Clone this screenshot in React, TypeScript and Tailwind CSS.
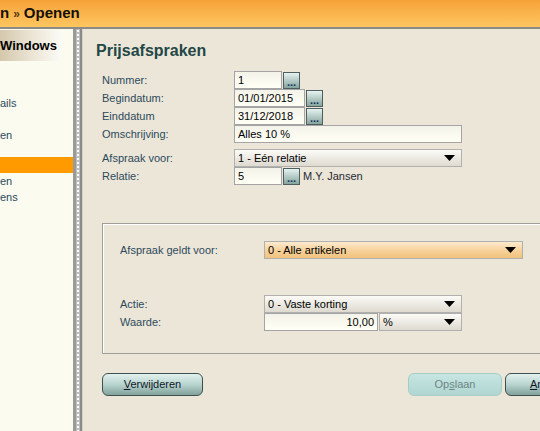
import type { ReactNode } from "react";

function Arrow() {
  return (
    <svg width="11" height="6" viewBox="0 0 11 6" className="shrink-0">
      <path d="M0 0h11L5.5 6z" fill="#000" />
    </svg>
  );
}

function DotsButton() {
  return (
    <span className="flex h-[17px] w-[17px] shrink-0 items-end justify-center border border-[#4f5f5f] bg-gradient-to-b from-[#e6f3f0] to-[#86a49e] pb-[1px] text-[11px] font-bold leading-[10px] text-[#12305a]">
      ...
    </span>
  );
}

function TextBox({ value, width, align = "left" }: { value: string; width: string; align?: "left" | "right" }) {
  return (
    <span
      className={`flex h-[18px] items-center border border-[#a4a4a4] bg-gradient-to-b from-[#f4f3ea] to-[#fffff6] px-[3px] text-[11px] text-black ${width} ${
        align === "right" ? "justify-end" : ""
      }`}
    >
      {value}
    </span>
  );
}

function Select({ value, width, orange = false }: { value: string; width: string; orange?: boolean }) {
  return (
    <span
      className={`flex h-[18px] items-center justify-between border border-[#b0b0ae] pl-[3px] pr-[6px] text-[11px] text-black ${width} ${
        orange ? "bg-gradient-to-b from-[#fdebd0] via-[#f8d29c] to-[#f0c27c]" : "bg-gradient-to-b from-[#fcfbf7] to-[#dedad0]"
      }`}
    >
      {value}
      <Arrow />
    </span>
  );
}

function Row({ label, labelWidth, children }: { label: string; labelWidth: string; children: ReactNode }) {
  return (
    <div className="flex h-[18px] items-center">
      <span className={`${labelWidth} shrink-0 text-[11px] text-[#2c4a5c]`}>{label}</span>
      <div className="flex items-center gap-[1px]">{children}</div>
    </div>
  );
}

function Button({ children, disabled = false, width }: { children: ReactNode; disabled?: boolean; width: string }) {
  return (
    <span
      className={`flex h-[23px] shrink-0 items-center justify-center rounded-[6px] text-[11px] ${width} ${
        disabled
          ? "border border-[#a8ccc6] bg-gradient-to-b from-[#c6e6e2] to-[#b0d6d2] text-[#6e8484]"
          : "border border-[#3e5050] bg-gradient-to-b from-[#e2f1ee] via-[#b8d4cf] to-[#82a29c] text-[#101828]"
      }`}
    >
      {children}
    </span>
  );
}

export default function App() {
  return (
    <div className="flex h-[431px] w-[540px] flex-col overflow-hidden bg-[#ece6d8] font-['Liberation_Sans',Arial,sans-serif]">
      <header className="flex h-[29px] shrink-0 items-center gap-[4px] border-b-2 border-[#8c8a84] bg-gradient-to-b from-[#f6a237] to-[#fec660] text-[15px] font-bold text-[#141008]">
        <span>n</span>
        <span className="text-[12px] text-[#5a3a10]">»</span>
        <span>Openen</span>
      </header>

      <div className="flex flex-1">
        <aside className="flex w-[73px] shrink-0 flex-col bg-[#fbfbef] text-[11px] text-[#2c4a5c]">
          <div className="mt-[1px] flex h-[31px] w-[62px] items-center bg-gradient-to-r from-[#d4c8ac] via-[#ebe4d4] to-[#fcfbf6] text-[13px] font-bold text-black">
            Windows
          </div>
          <span className="mt-[35px] leading-[14px]">ails</span>
          <span className="mt-[18px] leading-[14px]">en</span>
          <span className="mt-[15px] h-[16px] bg-[#ff9a00]" />
          <span className="mt-[1px] leading-[14px]">en</span>
          <span className="mt-[2px] leading-[14px]">ens</span>
        </aside>

        <div className="flex w-[10px] shrink-0">
          <span className="w-[3px] bg-[#9a9a98]" />
          <span className="w-[4px] bg-[#bdbdbb] bg-[radial-gradient(circle,#ffffff_0.8px,transparent_1px)] bg-[length:4px_4px]" />
          <span className="w-[2px] bg-[#8a8a88]" />
          <span className="w-[1px] bg-[#d8d2c4]" />
        </div>

        <main className="flex min-w-0 flex-1 flex-col pl-[13px]">
          <h1 className="mt-[12px] text-[16px] font-bold leading-[20px] text-[#234646]">Prijsafspraken</h1>

          <div className="mt-[10px] flex flex-col pl-[6px]">
            <Row label="Nummer:" labelWidth="w-[132px]">
              <TextBox value="1" width="w-[48px]" />
              <DotsButton />
            </Row>
            <Row label="Begindatum:" labelWidth="w-[132px]">
              <TextBox value="01/01/2015" width="w-[71px]" />
              <DotsButton />
            </Row>
            <Row label="Einddatum" labelWidth="w-[132px]">
              <TextBox value="31/12/2018" width="w-[71px]" />
              <DotsButton />
            </Row>
            <Row label="Omschrijving:" labelWidth="w-[132px]">
              <TextBox value="Alles 10 %" width="w-[228px]" />
            </Row>
            <div className="h-[6px]" />
            <Row label="Afspraak voor:" labelWidth="w-[132px]">
              <Select value="1 - Eén relatie" width="w-[228px]" />
            </Row>
            <Row label="Relatie:" labelWidth="w-[132px]">
              <TextBox value="5" width="w-[48px]" />
              <DotsButton />
              <span className="ml-[2px] text-[11px] text-[#1e2a36]">M.Y. Jansen</span>
            </Row>
          </div>

          <section className="-mr-[20px] ml-[6px] mt-[38px] flex h-[131px] flex-col border border-[#a09e98] pl-[17px] pt-[17px] shadow-[inset_1px_1px_0_#ffffff]">
            <Row label="Afspraak geldt voor:" labelWidth="w-[144px]">
              <Select value="0 - Alle artikelen" width="w-[259px]" orange />
            </Row>
            <div className="h-[36px]" />
            <Row label="Actie:" labelWidth="w-[144px]">
              <Select value="0 - Vaste korting" width="w-[198px]" />
            </Row>
            <Row label="Waarde:" labelWidth="w-[144px]">
              <TextBox value="10,00" width="w-[114px]" align="right" />
              <Select value="%" width="w-[83px]" />
            </Row>
          </section>

          <div className="ml-[6px] mt-[19px] flex items-center">
            <Button width="w-[101px]">
              <span>
                <span className="underline">V</span>erwijderen
              </span>
            </Button>
            <span className="w-[205px] shrink-0" />
            <Button width="w-[94px]" disabled>
              <span>
                Op<span className="underline">s</span>laan
              </span>
            </Button>
            <span className="w-[3px] shrink-0" />
            <Button width="w-[100px]">
              <span>
                <span className="underline">A</span>nnuleren
              </span>
            </Button>
          </div>
        </main>
      </div>
    </div>
  );
}
